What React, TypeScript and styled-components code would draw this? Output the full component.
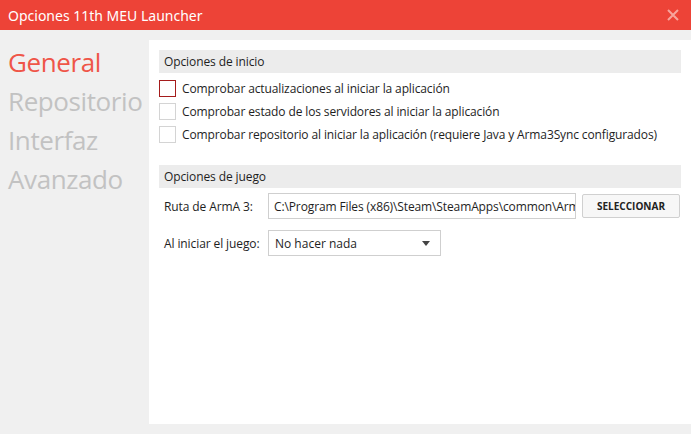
import React from "react";
import styled, { createGlobalStyle } from "styled-components";

const GlobalStyle = createGlobalStyle`
  html, body {
    margin: 0;
    padding: 0;
    background: #f0f0f0;
  }
  body {
    font-family: "Open Sans", "Noto Sans", sans-serif;
    color: #1e1e1e;
  }
`;

const startOptions = [
  "Comprobar actualizaciones al iniciar la aplicación",
  "Comprobar estado de los servidores al iniciar la aplicación",
  "Comprobar repositorio al iniciar la aplicación (requiere Java y Arma3Sync configurados)",
];

const menu = ["General", "Repositorio", "Interfaz", "Avanzado"];

const App = () => {
  return (
    <Window>
      <GlobalStyle />
      <TitleBar>
        <Title>Opciones 11th MEU Launcher</Title>
        <Close>
          <svg width="12" height="12" viewBox="0 0 12 12">
            <path d="M1 1 L11 11 M11 1 L1 11" stroke="#f7a49c" strokeWidth="2" />
          </svg>
        </Close>
      </TitleBar>
      <Body>
        <Sidebar>
          {menu.map((m, i) => (
            <MenuItem key={m} active={i === 0}>
              {m}
            </MenuItem>
          ))}
        </Sidebar>
        <Panel>
          <Section>
            <Header>Opciones de inicio</Header>
            <CheckList>
              {startOptions.map((o, i) => (
                <CheckRow key={o}>
                  <Box focused={i === 0} />
                  <CheckLabel>{o}</CheckLabel>
                </CheckRow>
              ))}
            </CheckList>
          </Section>
          <Section>
            <Header>Opciones de juego</Header>
            <FormRow>
              <Label>Ruta de ArmA 3:</Label>
              <PathInput
                readOnly
                value="C:\Program Files (x86)\Steam\SteamApps\common\Arma 3"
              />
              <Button>SELECCIONAR</Button>
            </FormRow>
            <FormRow>
              <Label>Al iniciar el juego:</Label>
              <Select>
                <span>No hacer nada</span>
                <svg width="8" height="5" viewBox="0 0 8 5">
                  <path d="M0 0 L8 0 L4 5 Z" fill="#444" />
                </svg>
              </Select>
            </FormRow>
          </Section>
        </Panel>
      </Body>
    </Window>
  );
};

export default App;

const Window = styled.div`
  width: 691px;
  height: 434px;
  display: flex;
  flex-direction: column;
  background: #f0f0f0;
  overflow: hidden;
`;
const TitleBar = styled.div`
  height: 30px;
  background: #ed4337;
  display: flex;
  align-items: center;
  justify-content: space-between;
  padding: 0 12px 0 8px;
`;
const Title = styled.div`
  color: #fff;
  font-size: 14px;
  font-family: "Noto Sans", sans-serif;
`;
const Close = styled.div`
  display: flex;
  align-items: center;
`;
const Body = styled.div`
  flex: 1;
  display: flex;
  padding: 10px 0 10px 0;
`;
const Sidebar = styled.div`
  width: 149px;
  display: flex;
  flex-direction: column;
  padding-top: 3px;
`;
const MenuItem = styled.div<{ active?: boolean }>`
  font-size: 26px;
  height: 39px;
  line-height: 39px;
  padding-left: 8px;
  color: ${({ active }) => (active ? "#ef5548" : "#c2c2c2")};
  letter-spacing: -0.4px;
`;
const Panel = styled.div`
  flex: 1;
  background: #fff;
  padding: 10px 10px 0 10px;
  display: flex;
  flex-direction: column;
  gap: 22px;
`;
const Section = styled.div`
  display: flex;
  flex-direction: column;
`;
const Header = styled.div`
  background: #ececec;
  height: 23px;
  line-height: 23px;
  padding-left: 5px;
  font-size: 12px;
  letter-spacing: -0.1px;
`;
const CheckList = styled.div`
  display: flex;
  flex-direction: column;
  gap: 6px;
  padding-top: 7px;
`;
const CheckRow = styled.div`
  display: flex;
  align-items: center;
  gap: 6px;
`;
const Box = styled.div<{ focused?: boolean }>`
  width: 15px;
  height: 15px;
  border: 1px solid ${({ focused }) => (focused ? "#a51c1c" : "#d4d4d4")};
  background: #fff;
`;
const CheckLabel = styled.div`
  font-size: 12px;
  letter-spacing: -0.12px;
`;
const FormRow = styled.div`
  display: flex;
  align-items: center;
  margin-top: 5px;
  & + & {
    margin-top: 11px;
  }
`;
const Label = styled.div`
  font-size: 12px;
  width: 104px;
  padding-left: 5px;
  letter-spacing: -0.1px;
`;
const PathInput = styled.input`
  box-sizing: border-box;
  width: 308px;
  height: 26px;
  border: 1px solid #cfcfcf;
  padding: 0 0 0 5px;
  margin: 0;
  font-family: "Open Sans", "Noto Sans", sans-serif;
  font-size: 12px;
  letter-spacing: -0.12px;
  color: #1e1e1e;
  outline: none;
`;
const Button = styled.div`
  box-sizing: border-box;
  margin-left: 6px;
  width: 98px;
  height: 24px;
  display: flex;
  align-items: center;
  justify-content: center;
  background: #f7f7f7;
  border: 1px solid #d0d0d0;
  border-radius: 2px;
  font-size: 10px;
  font-weight: 700;
  color: #222;
`;
const Select = styled.div`
  box-sizing: border-box;
  width: 173px;
  height: 26px;
  border: 1px solid #cfcfcf;
  padding: 0 10px 0 6px;
  display: flex;
  align-items: center;
  justify-content: space-between;
  font-size: 12px;
`;
